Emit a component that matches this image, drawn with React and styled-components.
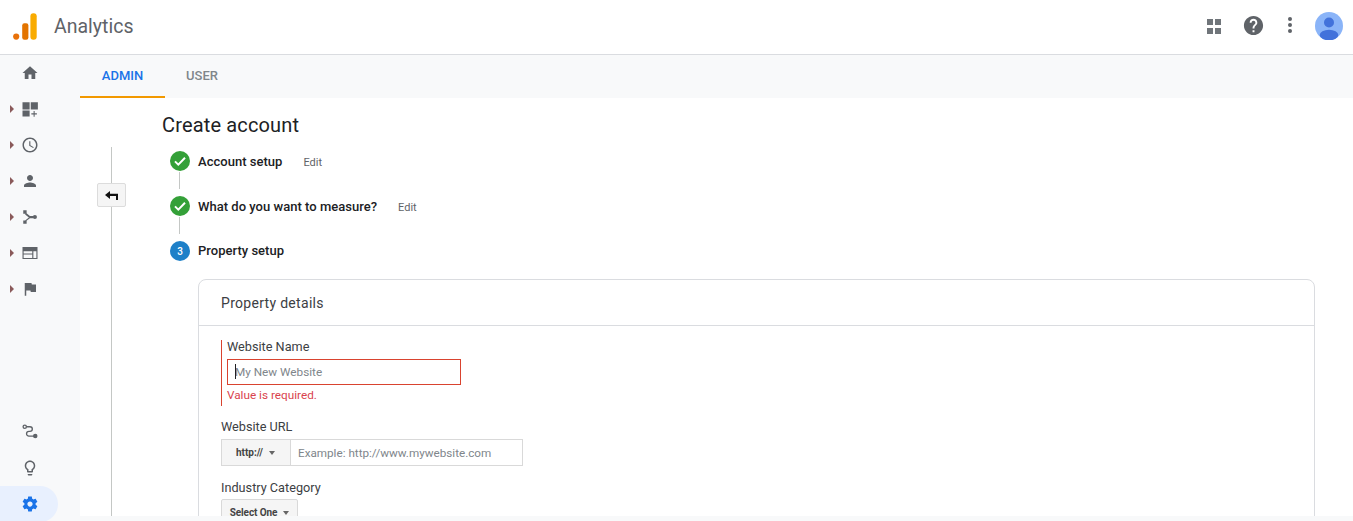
import styled, { createGlobalStyle } from 'styled-components';

const GlobalStyle = createGlobalStyle`
    html, body {
        margin: 0;
        padding: 0;
        height: 100%;
        overflow: hidden;
        background: #fff;
        font-family: Roboto, "Liberation Sans", sans-serif;
        color: #202124;
    }
    * {
        box-sizing: border-box;
    }
`

function Icon({ d, size = 18, color = '#5f6368' }) {
    return (
        <svg width={size} height={size} viewBox="0 0 24 24" fill={color}>
            <path d={d} />
        </svg>
    )
}

function RouteIcon() {
    return (
        <svg width="18" height="18" viewBox="0 0 24 24" fill="none" stroke="#5f6368" strokeWidth="1.8">
            <circle cx="5" cy="5" r="2.2" />
            <path d="M7.2 5H12a3.1 3.1 0 0 1 0 6.2H10.5a3.1 3.1 0 0 0 0 6.2H18" />
            <circle cx="19" cy="17.4" r="3" fill="#5f6368" stroke="none" />
        </svg>
    )
}

const topIcons = [
    { name: 'home', d: 'M10 20v-6h4v6h5v-8h3L12 3 2 12h3v8z' },
    { name: 'dashboard', caret: true, d: 'M2 3h9.5v9.5H2zM13 3h9.5v9.5H13zM2 14h9.5v8H2zM16.8 14.8h1.4v3h3v1.4h-3v3h-1.4v-3h-3v-1.4h3z' },
    { name: 'clock', caret: true, d: 'M11.99 2C6.47 2 2 6.48 2 12s4.47 10 9.99 10C17.52 22 22 17.52 22 12S17.52 2 11.99 2zM12 20c-4.42 0-8-3.58-8-8s3.58-8 8-8 8 3.58 8 8-3.58 8-8 8zm.5-13H11v6l5.25 3.15.75-1.23-4.5-2.67z' },
    { name: 'person', caret: true, d: 'M12 12c2.21 0 4-1.79 4-4s-1.79-4-4-4-4 1.79-4 4 1.79 4 4 4zm0 2c-2.67 0-8 1.34-8 4v2h16v-2c0-2.66-5.33-4-8-4z' },
    { name: 'acquisition', caret: true, d: 'M3 3h4.5v4.5H3zM3 16.5h4.5V21H3zM6.5 6.2l5.4 4.3H16v3h-4.1l-5.4 4.3-1-1.2 5-4-5-4zM18.5 9.2a2.8 2.8 0 1 1 0 5.6 2.8 2.8 0 0 1 0-5.6z' },
    { name: 'behavior', caret: true, d: 'M2 4h20v16H2zM3.5 9.5v3h11.5v-3zM3.5 14v4.5h11.5V14zM16.5 9.5v9h4v-9z' },
    { name: 'flag', caret: true, d: 'M14.4 6L14 4H5v17h2v-7h5.6l.4 2h7V6z' },
]

const bottomIcons = [
    { name: 'route', icon: <RouteIcon /> },
    { name: 'bulb', d: 'M9 21c0 .55.45 1 1 1h4c.55 0 1-.45 1-1v-1H9v1zm3-19C8.14 2 5 5.14 5 9c0 2.38 1.19 4.47 3 5.74V17c0 .55.45 1 1 1h6c.55 0 1-.45 1-1v-2.26c1.81-1.27 3-3.36 3-5.74 0-3.86-3.14-7-7-7zm2.85 11.1l-.85.6V16h-4v-2.3l-.85-.6C7.8 12.16 7 10.63 7 9c0-2.76 2.24-5 5-5s5 2.24 5 5c0 1.63-.8 3.16-2.15 4.1z' },
    { name: 'settings', active: true, d: 'M19.43 12.98c.04-.32.07-.64.07-.98s-.03-.66-.07-.98l2.11-1.65c.19-.15.24-.42.12-.64l-2-3.46c-.12-.22-.39-.3-.61-.22l-2.49 1c-.52-.4-1.08-.73-1.69-.98l-.38-2.65C14.46 2.18 14.25 2 14 2h-4c-.25 0-.46.18-.49.42l-.38 2.65c-.61.25-1.17.59-1.69.98l-2.49-1c-.23-.09-.49 0-.61.22l-2 3.46c-.13.22-.07.49.12.64l2.11 1.65c-.04.32-.07.65-.07.98s.03.66.07.98l-2.11 1.65c-.19.15-.24.42-.12.64l2 3.46c.12.22.39.3.61.22l2.49-1c.52.4 1.08.73 1.69.98l.38 2.65c.03.24.24.42.49.42h4c.25 0 .46-.18.49-.42l.38-2.65c.61-.25 1.17-.59 1.69-.98l2.49 1c.23.09.49 0 .61-.22l2-3.46c.12-.22.07-.49-.12-.64l-2.11-1.65zM12 15.5c-1.93 0-3.5-1.57-3.5-3.5s1.57-3.5 3.5-3.5 3.5 1.57 3.5 3.5-1.57 3.5-3.5 3.5z' },
]

const helpPath = 'M12 2C6.48 2 2 6.48 2 12s4.48 10 10 10 10-4.48 10-10S17.52 2 12 2zm1 17h-2v-2h2v2zm2.07-7.75l-.9.92C13.45 12.9 13 13.5 13 15h-2v-.5c0-1.1.45-2.1 1.17-2.83l1.24-1.26c.37-.36.59-.86.59-1.41 0-1.1-.9-2-2-2s-2 .9-2 2H8c0-2.21 1.79-4 4-4s4 1.79 4 4c0 .88-.36 1.68-.93 2.25z'

function SideItem({ item }) {
    return (
        <SideRow $active={item.active}>
            {item.caret && <Caret />}
            {item.icon || <Icon d={item.d} color={item.active ? '#1a73e8' : '#5f6368'} />}
        </SideRow>
    )
}

function Step({ state, number, title, edit, last }) {
    return (
        <StepRow $last={last}>
            <StepLeft>
                <StepCircle $state={state}>
                    {state === 'done' ? (
                        <svg width="14" height="14" viewBox="0 0 14 14" fill="none" stroke="#fff" strokeWidth="2">
                            <path d="M2 7.4l3.3 3.2L12 3.8" />
                        </svg>
                    ) : number}
                </StepCircle>
                {!last && <StepLine />}
            </StepLeft>
            <StepTitle $last={last}>{title}</StepTitle>
            {edit && <EditLink>Edit</EditLink>}
        </StepRow>
    )
}

export default function App() {
    return (
        <Page>
            <GlobalStyle />
            <Header>
                <Logo>
                    <svg width="24" height="27" viewBox="0 0 24 27">
                        <circle cx="3.2" cy="23.6" r="3.1" fill="#e8710a" />
                        <rect x="9.2" y="10.2" width="6.2" height="16.6" rx="2.2" fill="#e37400" />
                        <rect x="17.4" y="0.2" width="6.3" height="26.6" rx="3" fill="#f9ab00" />
                    </svg>
                    <AppName>Analytics</AppName>
                </Logo>
                <HeaderActions>
                    <AppsGrid>
                        <span /><span /><span /><span />
                    </AppsGrid>
                    <HelpIcon>
                        <Icon d={helpPath} size={23} />
                    </HelpIcon>
                    <MoreDots>
                        <span /><span /><span />
                    </MoreDots>
                    <Avatar>
                        <svg width="28" height="28" viewBox="0 0 28 28">
                            <circle cx="14" cy="14" r="14" fill="#8ab4f8" />
                            <circle cx="14" cy="10.5" r="5" fill="#4272db" />
                            <ellipse cx="14" cy="23" rx="9.3" ry="5.3" fill="#4272db" />
                        </svg>
                    </Avatar>
                </HeaderActions>
            </Header>
            <Below>
                <Sidebar>
                    <SideGroup>
                        {topIcons.map(item => <SideItem key={item.name} item={item} />)}
                    </SideGroup>
                    <SideGroup $bottom>
                        {bottomIcons.map(item => <SideItem key={item.name} item={item} />)}
                    </SideGroup>
                </Sidebar>
                <Main>
                    <Tabs>
                        <Tab $active>ADMIN</Tab>
                        <Tab>USER</Tab>
                    </Tabs>
                    <Content>
                        <Rail>
                            <RailLine $short />
                            <BackButton>
                                <svg width="13" height="9" viewBox="0 0 13 9">
                                    <path d="M0 4L5 0V2.7H13V9H11V4.9H5V8z" fill="#111" />
                                </svg>
                            </BackButton>
                            <RailLine />
                        </Rail>
                        <Body>
                            <Title>Create account</Title>
                            <Steps>
                                <Step state="done" title="Account setup" edit />
                                <Step state="done" title="What do you want to measure?" edit />
                                <Step state="current" number="3" title="Property setup" last />
                            </Steps>
                            <Card>
                                <CardHeader>Property details</CardHeader>
                                <CardBody>
                                    <ErrorField>
                                        <FieldLabel>Website Name</FieldLabel>
                                        <NameInputWrap>
                                            <TextCaret />
                                            <NameInput placeholder="My New Website" readOnly />
                                        </NameInputWrap>
                                        <ErrorText>Value is required.</ErrorText>
                                    </ErrorField>
                                    <FieldLabel>Website URL</FieldLabel>
                                    <UrlGroup>
                                        <Addon>http:// <Arrow /></Addon>
                                        <UrlInput placeholder="Example: http://www.mywebsite.com" readOnly />
                                    </UrlGroup>
                                    <FieldLabel $industry>Industry Category</FieldLabel>
                                    <SelectButton>Select One <Arrow /></SelectButton>
                                </CardBody>
                            </Card>
                        </Body>
                    </Content>
                </Main>
            </Below>
        </Page>
    )
}

const Page = styled.div`
    width: 1353px;
    height: 521px;
    display: flex;
    flex-direction: column;
    overflow: hidden;
`

const Header = styled.header`
    height: 55px;
    flex-shrink: 0;
    border-bottom: 1px solid #dadce0;
    display: flex;
    align-items: center;
    justify-content: space-between;
    padding: 0 10px 2px 13px;
`

const Logo = styled.div`
    display: flex;
    align-items: center;
    gap: 17px;
`

const AppName = styled.span`
    font-size: 19.5px;
    color: #5f6368;
`

const HeaderActions = styled.div`
    display: flex;
    align-items: center;
`

const AppsGrid = styled.div`
    display: grid;
    grid-template-columns: 6px 6px;
    grid-auto-rows: 6px;
    gap: 3px 2px;
    margin: 1px 21px 0 0;

    span {
        background: #70757a;
    }
`

const HelpIcon = styled.div`
    display: flex;
    margin: 0 23px 2px 0;
`

const MoreDots = styled.div`
    display: flex;
    flex-direction: column;
    gap: 2px;
    margin: 0 23px 2px 0;

    span {
        width: 4px;
        height: 4px;
        border-radius: 50%;
        background: #5f6368;
    }
`

const Avatar = styled.div`
    display: flex;
    width: 28px;
    height: 28px;
`

const Below = styled.div`
    flex: 1;
    display: flex;
    min-height: 0;
`

const Sidebar = styled.nav`
    width: 80px;
    flex-shrink: 0;
    background: #f8f9fa;
    display: flex;
    flex-direction: column;
    justify-content: space-between;
    overflow: hidden;
`

const SideGroup = styled.div`
    display: flex;
    flex-direction: column;
    margin-bottom: ${props => (props.$bottom ? '-1px' : '0')};
`

const SideRow = styled.div`
    height: 36px;
    width: 58px;
    display: flex;
    align-items: center;
    padding-left: 20.5px;
    position: relative;
    border-radius: 0 18px 18px 0;
    background: ${props => (props.$active ? '#e8f0fe' : 'transparent')};
`

const Caret = styled.span`
    position: absolute;
    left: 10px;
    top: 14px;
    border-left: 4px solid #8a5a5a;
    border-top: 4px solid transparent;
    border-bottom: 4px solid transparent;
`

const Main = styled.main`
    flex: 1;
    min-width: 0;
    display: flex;
    flex-direction: column;
    background: #f8f9fa;
    padding-bottom: 5px;
`

const Tabs = styled.div`
    height: 43px;
    flex-shrink: 0;
    display: flex;
`

const Tab = styled.div`
    width: ${props => (props.$active ? '85px' : '74px')};
    display: flex;
    align-items: center;
    justify-content: center;
    font-size: 13px;
    font-weight: 500;
    padding-bottom: 1px;
    color: ${props => (props.$active ? '#1a73e8' : '#80868b')};
    border-bottom: 2px solid ${props => (props.$active ? '#f29900' : 'transparent')};
`

const Content = styled.div`
    flex: 1;
    min-height: 0;
    display: flex;
    background: #fff;
    overflow: hidden;
`

const Rail = styled.div`
    width: 29px;
    margin-left: 17px;
    padding-top: 49px;
    display: flex;
    flex-direction: column;
    align-items: center;
    flex-shrink: 0;
`

const RailLine = styled.div`
    width: 1px;
    background: #c4c7c5;
    height: ${props => (props.$short ? '36px' : 'auto')};
    flex: ${props => (props.$short ? 'none' : '1')};
`

const BackButton = styled.div`
    width: 29px;
    height: 24px;
    flex-shrink: 0;
    background: #f5f5f5;
    border: 1px solid #dcdcdc;
    border-radius: 2px;
    display: flex;
    align-items: center;
    justify-content: center;
`

const Body = styled.div`
    flex: 1;
    min-width: 0;
    margin-left: 36px;
    padding-right: 38px;
`

const Title = styled.h1`
    margin: 0;
    padding-top: 15px;
    font-size: 20px;
    line-height: 24px;
    font-weight: 400;
    letter-spacing: 0.15px;
    color: #202124;
`

const Steps = styled.div`
    margin: 14px 0 0 8px;
`

const StepRow = styled.div`
    display: flex;
    height: ${props => (props.$last ? '38px' : '45px')};
`

const StepLeft = styled.div`
    width: 20px;
    display: flex;
    flex-direction: column;
    align-items: center;
    margin-right: 8px;
`

const StepCircle = styled.div`
    width: 20px;
    height: 20px;
    flex-shrink: 0;
    border-radius: 50%;
    display: flex;
    align-items: center;
    justify-content: center;
    font-size: 10px;
    font-weight: 500;
    color: #fff;
    background: ${props => (props.$state === 'done' ? '#34a038' : '#1e80c8')};
`

const StepLine = styled.div`
    width: 1px;
    height: 17px;
    margin-top: 1px;
    margin-right: 1px;
    background: #c4c7c5;
`

const StepTitle = styled.div`
    font-size: 13px;
    line-height: ${props => (props.$last ? '20px' : '22px')};
    font-weight: 500;
    letter-spacing: 0.02px;
    color: #202124;
`

const EditLink = styled.span`
    font-size: 11px;
    line-height: 24px;
    color: #5f6368;
    margin-left: 21px;
`

const Card = styled.section`
    margin: 0 0 0 36px;
    border: 1px solid #dadce0;
    border-radius: 8px 8px 0 0;
    min-height: 300px;
`

const CardHeader = styled.div`
    height: 46px;
    border-bottom: 1px solid #dadce0;
    display: flex;
    align-items: center;
    padding-left: 22px;
    font-size: 14px;
    letter-spacing: 0.3px;
    color: #3c4043;
`

const CardBody = styled.div`
    padding: 14px 22px;
`

const ErrorField = styled.div`
    height: 66px;
    border-left: 1px solid #d9432f;
    padding-left: 5px;
    margin-bottom: 14px;
`

const FieldLabel = styled.label`
    display: block;
    font-size: 12.7px;
    line-height: 13px;
    color: #3c4043;
    margin-top: ${props => (props.$industry ? '15px' : '0')};
`

const NameInputWrap = styled.div`
    position: relative;
    width: 234px;
    height: 26px;
    margin-top: 6px;
`

const NameInput = styled.input`
    width: 100%;
    height: 100%;
    border: 1px solid #d9432f;
    padding: 0 7px;
    font: 11.75px Roboto, sans-serif;
    outline: none;

    &::placeholder {
        color: #80868b;
    }
`

const TextCaret = styled.span`
    position: absolute;
    left: 8px;
    top: 5px;
    width: 1px;
    height: 15px;
    background: #202124;
`

const ErrorText = styled.div`
    font-size: 11.75px;
    line-height: 14px;
    margin-top: 3px;
    color: #d9434e;
`

const UrlGroup = styled.div`
    display: flex;
    width: 302px;
    height: 27px;
    margin-top: 6px;
    border: 1px solid #d9d9d9;
`

const Addon = styled.div`
    width: 69px;
    flex-shrink: 0;
    background: #f5f5f5;
    border-right: 1px solid #d9d9d9;
    display: flex;
    align-items: center;
    justify-content: center;
    gap: 6px;
    padding-right: 1px;
    font-size: 10px;
    font-weight: 700;
    color: #444;
`

const Arrow = styled.span`
    border-top: 4px solid #666;
    border-left: 3.5px solid transparent;
    border-right: 3.5px solid transparent;
`

const UrlInput = styled.input`
    flex: 1;
    min-width: 0;
    border: none;
    padding: 0 7px;
    font: 11.7px Roboto, sans-serif;
    outline: none;

    &::placeholder {
        color: #80868b;
    }
`

const SelectButton = styled.div`
    width: 77px;
    height: 27px;
    margin-top: 5px;
    background: #f5f5f5;
    border: 1px solid #d9d9d9;
    border-radius: 2px 2px 0 0;
    display: flex;
    align-items: center;
    justify-content: center;
    gap: 6px;
    font-size: 10px;
    font-weight: 700;
    letter-spacing: -0.1px;
    color: #444;
`
